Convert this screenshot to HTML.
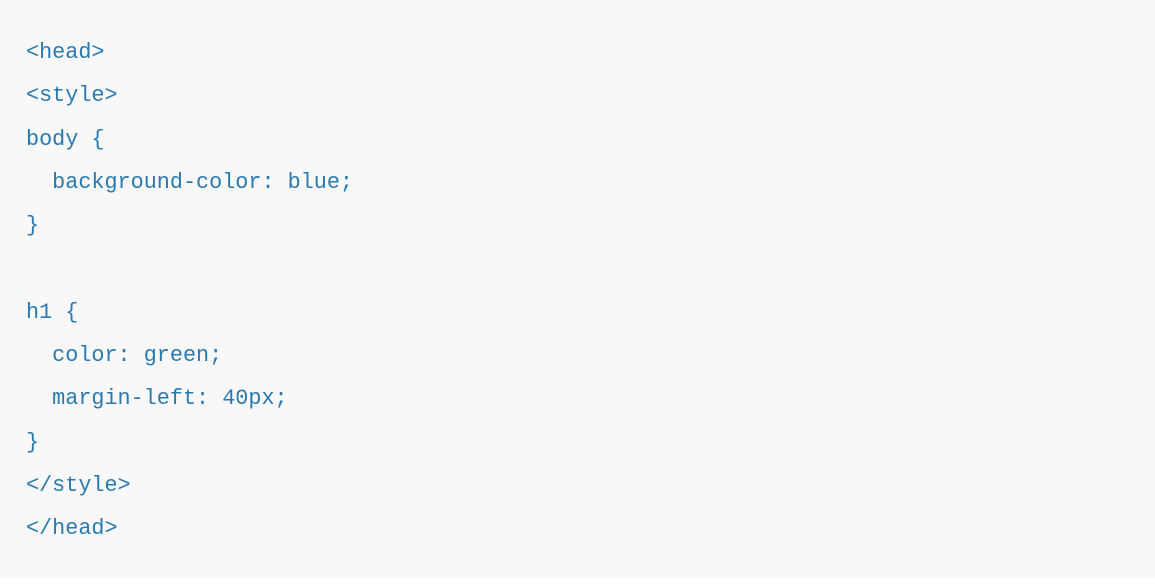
<!DOCTYPE html>
<html><head><style>
html,body{margin:0;padding:0;background:#fff;}
.box{position:absolute;left:0;top:0;width:1155px;height:578px;background:#f8f8f8;}
pre{margin:0;position:absolute;left:26px;top:31px;font-family:"Liberation Mono",monospace;font-size:21.8px;letter-spacing:0;line-height:43.3px;color:#2a7ab0;}
</style></head><body>
<div class="box"><pre>&lt;head&gt;
&lt;style&gt;
body {
  background-color: blue;
}

h1 {
  color: green;
  margin-left: 40px;
}
&lt;/style&gt;
&lt;/head&gt;</pre></div>
</body></html>
